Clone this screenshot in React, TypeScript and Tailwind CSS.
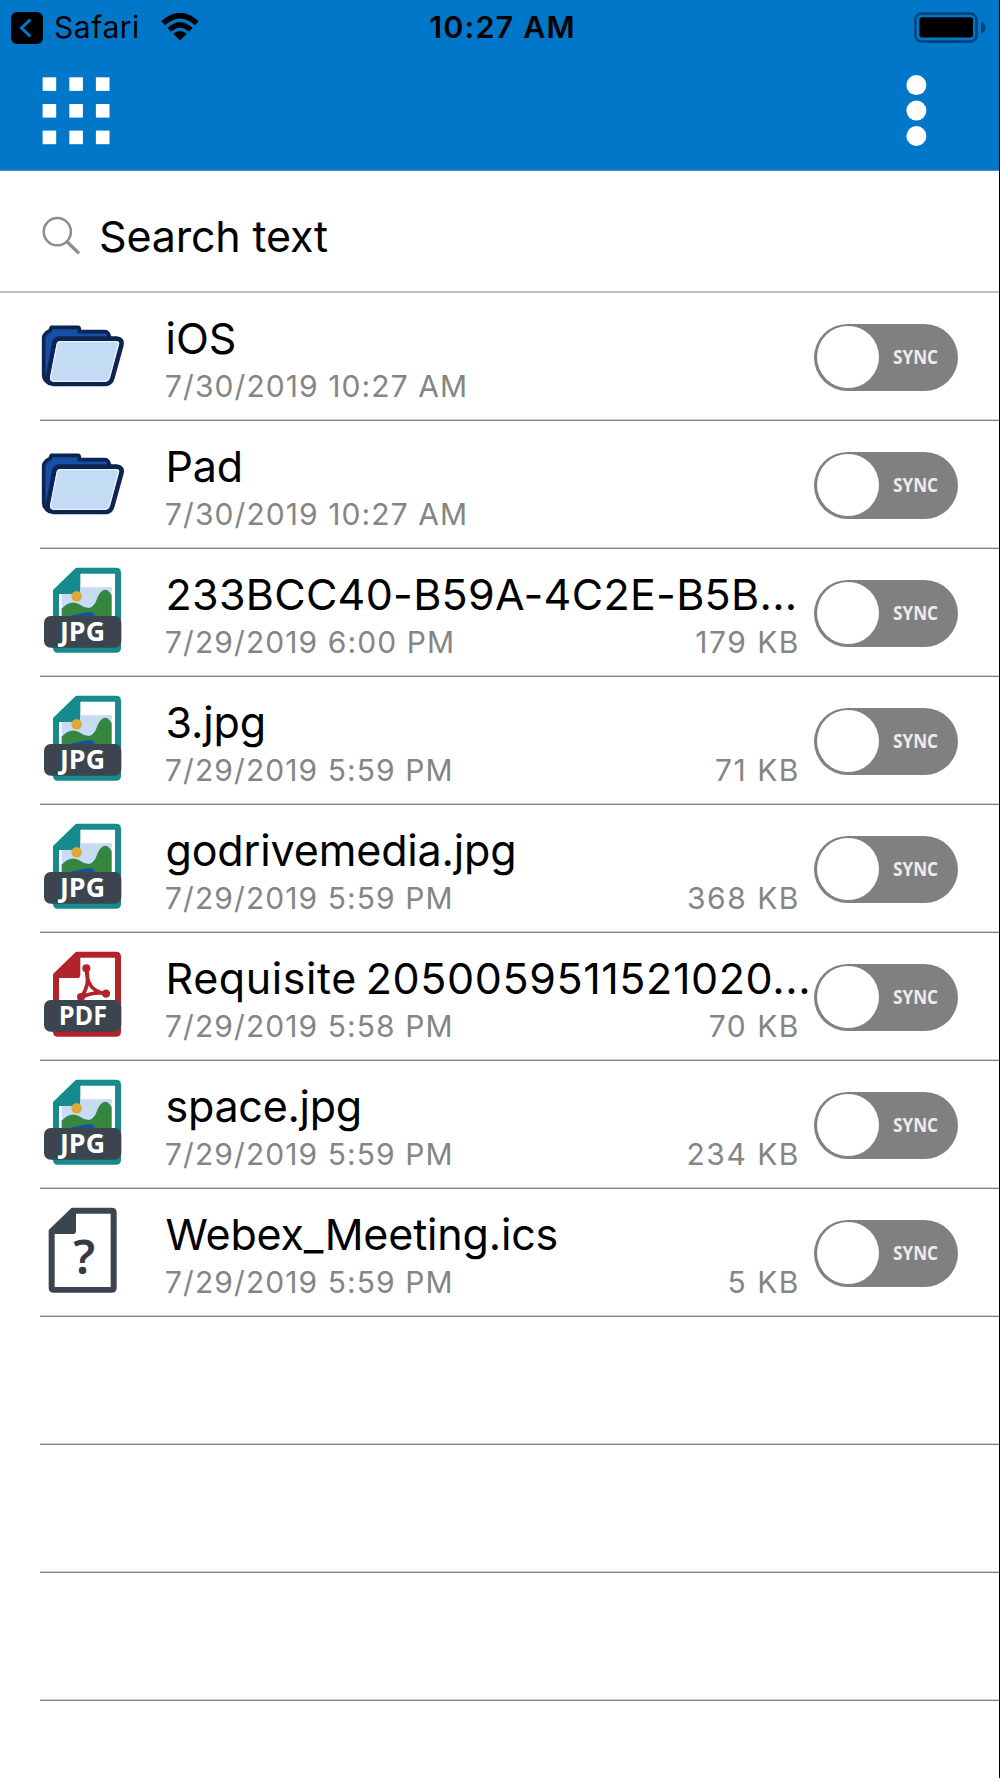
import type { ReactNode } from 'react';
import clsx from 'clsx';

type FileKind = 'folder' | 'jpg' | 'pdf' | 'unknown';

interface FileItem {
  name: string;
  date: string;
  size?: string;
  kind: FileKind;
  tracking?: string;
}

const files: FileItem[] = [
  { name: 'iOS', date: '7/30/2019 10:27 AM', kind: 'folder' },
  { name: 'Pad', date: '7/30/2019 10:27 AM', kind: 'folder', tracking: 'tracking-[-0.2px]' },
  { name: '233BCC40-B59A-4C2E-B5B...', date: '7/29/2019 6:00 PM', size: '179 KB', kind: 'jpg', tracking: 'tracking-[0.3px]' },
  { name: '3.jpg', date: '7/29/2019 5:59 PM', size: '71 KB', kind: 'jpg', tracking: 'tracking-[-0.1px]' },
  { name: 'godrivemedia.jpg', date: '7/29/2019 5:59 PM', size: '368 KB', kind: 'jpg', tracking: 'tracking-[-0.14px]' },
  { name: 'Requisite 2050059511521020...', date: '7/29/2019 5:58 PM', size: '70 KB', kind: 'pdf', tracking: 'tracking-[0.6px] [word-spacing:-4px]' },
  { name: 'space.jpg', date: '7/29/2019 5:59 PM', size: '234 KB', kind: 'jpg', tracking: 'tracking-[-0.25px]' },
  { name: 'Webex_Meeting.ics', date: '7/29/2019 5:59 PM', size: '5 KB', kind: 'unknown', tracking: 'tracking-[-0.17px]' },
];

const emptyRows = [1, 2, 3];
const gridSteps = [0, 26.7, 53.3];

function IconFrame({ children }: { children: ReactNode }) {
  return (
    <svg viewBox="30 30 264 300" className="mt-[11px] h-[100px] w-[88px] shrink-0">
      {children}
    </svg>
  );
}

function FolderIcon() {
  return (
    <IconFrame>
      <path
        d="M58 268 Q41 258 41 242 V132 Q41 122 50 116 L60 110 L64 100 H144 Q148 100 148 106 V113 H224 Q234 113 238 127 V200 Z"
        fill="#1450a8"
        stroke="#0f2350"
        strokeWidth="11"
        strokeLinejoin="round"
      />
      <path
        d="M86 134 H260 Q279 136 274 154 L247 252 Q242 270 226 270 H70 Q50 268 54 248 L73 148 Q76 134 88 134 Z"
        fill="#c3dcf3"
        stroke="#0f2350"
        strokeWidth="14"
        strokeLinejoin="round"
      />
      <path
        d="M90 143 H258 Q266 145 264 153 L239 248 Q235 262 225 262 H72 Q60 260 62 248 L81 153 Q83 143 90 143 Z"
        fill="none"
        stroke="#e4f0fc"
        strokeWidth="4"
      />
    </IconFrame>
  );
}

// Sheet outline with a folded corner, shared by the document icons
function Sheet({ color }: { color: string }) {
  return (
    <>
      <path d="M138 53 H258 Q273 53 273 68 V293 Q273 308 258 308 H84 Q69 308 69 293 V120 Z" fill={color} />
      <path d="M151 71 H255 V291 H87 V132 H141 Q151 132 151 122 Z" fill="#fff" />
    </>
  );
}

function TypeLabel({ text }: { text: string }) {
  return (
    <>
      <rect x="42" y="198" width="232" height="95" rx="20" fill="#3c444f" />
      <text
        x={text === 'JPG' ? 90 : 86}
        y="273"
        fill="#fff"
        textLength={text === 'JPG' ? 135 : 145}
        lengthAdjust="spacingAndGlyphs"
        className="font-['Open_Sans'] text-[78px] font-bold"
      >
        {text}
      </text>
    </>
  );
}

function JpgIcon() {
  return (
    <IconFrame>
      <Sheet color="#168a8c" />
      <path d="M151 112 H245 V210 H95 V132 H141 Q151 132 151 122 Z" fill="#c6dcf5" />
      <circle cx="140" cy="139" r="16" fill="#e0a835" />
      <path d="M95 176 Q122 148 146 162 Q160 172 176 174 Q192 174 203 142 Q214 116 230 120 Q240 124 245 136 V210 H95 Z" fill="#378640" />
      <path d="M102 202 Q140 192 172 187 Q194 184 196 202 Z" fill="#1450a8" />
      <TypeLabel text="JPG" />
    </IconFrame>
  );
}

function PdfIcon() {
  return (
    <IconFrame>
      <Sheet color="#b3232b" />
      <path
        d="M169 104 Q170 152 196 168 Q212 179 229 178 Q190 172 153 190 Q182 152 169 104 Z"
        fill="none"
        stroke="#b3232b"
        strokeWidth="11"
        strokeLinejoin="round"
      />
      <circle cx="169" cy="103" r="12" fill="#b3232b" />
      <circle cx="228" cy="179" r="12.5" fill="#b3232b" />
      <circle cx="153" cy="189" r="12" fill="#b3232b" />
      <TypeLabel text="PDF" />
    </IconFrame>
  );
}

function UnknownIcon() {
  return (
    <IconFrame>
      <g transform="translate(-13 0)">
        <Sheet color="#3c444f" />
      </g>
      <text x="130" y="251" fill="#343b45" className="font-['Noto_Sans'] text-[142px] font-semibold">
        ?
      </text>
    </IconFrame>
  );
}

const icons: Record<FileKind, () => ReactNode> = {
  folder: FolderIcon,
  jpg: JpgIcon,
  pdf: PdfIcon,
  unknown: UnknownIcon,
};

function SyncToggle() {
  return (
    <button
      type="button"
      className="mt-[30.5px] flex h-[67.5px] w-[143.5px] shrink-0 items-center rounded-full bg-[#808080] pl-[3px]"
    >
      <span className="size-[62px] rounded-full bg-white" />
      <span className="ml-[13.5px] origin-left scale-x-[0.88] pb-px font-['Open_Sans'] text-[19.5px] leading-none font-bold text-[#ececec]">
        SYNC
      </span>
    </button>
  );
}

function FileRow({ file }: { file: FileItem }) {
  const Icon = icons[file.kind];
  return (
    <li className="flex h-32 border-b border-[#808080] shadow-[inset_0_-1px_0_#d0d0d0]">
      <Icon />
      <div className="ml-[37px] w-[635px] shrink-0 pt-[19px] whitespace-nowrap">
        <p className={clsx('pl-[0.5px] text-[43px] leading-[52px] text-black', file.tracking)}>{file.name}</p>
        <div className="mt-1 flex justify-between text-[30px] leading-9 text-[#858585]">
          <span className="tracking-[1.08px]">{file.date}</span>
          {file.size && <span className="tracking-[1.5px]">{file.size}</span>}
        </div>
      </div>
      <div className="ml-[14px]">
        <SyncToggle />
      </div>
    </li>
  );
}

function StatusBar() {
  return (
    <div className="grid h-[54px] grid-cols-3 text-black">
      <div className="flex items-start pl-[11px]">
        <svg viewBox="0 0 32 32" className="mt-3 size-8">
          <rect width="32" height="32" rx="6" fill="#000" />
          <path d="M19.5 7.5 L10.5 16 L19.5 24.5" fill="none" stroke="#0078c8" strokeWidth="3" />
        </svg>
        <span className="mt-[9px] ml-[11px] text-[30px] leading-9 tracking-[0.55px]">Safari</span>
        <svg viewBox="0 0 38 28" className="mt-[13px] ml-[21px] h-7 w-[38px]">
          <g fill="none" stroke="#000" strokeWidth="5.4">
            <path d="M2.2 10.2 Q19 -5 35.8 10.2" />
            <path d="M8.2 16.8 Q19 7.2 29.8 16.8" />
          </g>
          <path d="M12.2 20.8 Q19 15 25.8 20.8 L19 27.4 Z" fill="#000" />
        </svg>
      </div>
      <p className="pt-[9px] pl-[6px] text-center text-[30.5px] leading-9 font-semibold tracking-[1.15px]">10:27 AM</p>
      <svg viewBox="0 0 72 32" className="mt-3 mr-[13px] h-8 w-[72px] justify-self-end">
        <rect x="1.4" y="1.6" width="61" height="28" rx="6" fill="none" stroke="#00447c" strokeWidth="2.6" />
        <rect x="5.4" y="5.2" width="53.6" height="20.4" rx="2.5" fill="#000" />
        <path d="M67 9.5 Q71.5 11 71.5 15.5 Q71.5 20 67 21.5 Z" fill="#00447c" />
      </svg>
    </div>
  );
}

export default function App() {
  return (
    <div className="flex h-[1778px] w-[1000px] flex-col overflow-hidden border-r border-black bg-white font-['Inter',sans-serif]">
      <header className="h-[171px] shrink-0 border-b border-[#4f8dbd] bg-[#0077c8]">
        <StatusBar />
        <div className="flex justify-between pt-[23px] pr-[72px] pl-[42px]">
          <svg viewBox="0 0 68 68" className="size-[68px]" fill="#fff">
            {gridSteps.map((y) =>
              gridSteps.map((x) => <rect key={`${x}-${y}`} x={x + 0.6} y={y + 0.3} width="13.6" height="13.6" />)
            )}
          </svg>
          <svg viewBox="0 0 22 74" className="-mt-[3px] h-[74px] w-[22px]" fill="#fff">
            <circle cx="11.4" cy="11.1" r="10" />
            <circle cx="11.4" cy="36.6" r="10" />
            <circle cx="11.4" cy="62" r="10" />
          </svg>
        </div>
      </header>

      <div className="flex h-[122px] shrink-0 border-b-2 border-[#c0c0c0] pt-[39px] pl-[42px]">
        <svg viewBox="0 0 40 40" className="mt-[6px] size-10" fill="none" stroke="#8e8e8e">
          <circle cx="15.3" cy="15.7" r="13.6" strokeWidth="2.5" />
          <path d="M25 25.8 L37 37.4" strokeWidth="3.4" />
        </svg>
        <span className="ml-[17px] text-[43px] leading-[52px] tracking-[-0.18px] text-black">Search text</span>
      </div>

      <ul className="pl-10">
        {files.map((file) => (
          <FileRow key={file.name} file={file} />
        ))}
        {emptyRows.map((row) => (
          <li key={row} className="h-32 border-b border-[#808080] shadow-[inset_0_-1px_0_#d0d0d0]" />
        ))}
      </ul>
    </div>
  );
}
